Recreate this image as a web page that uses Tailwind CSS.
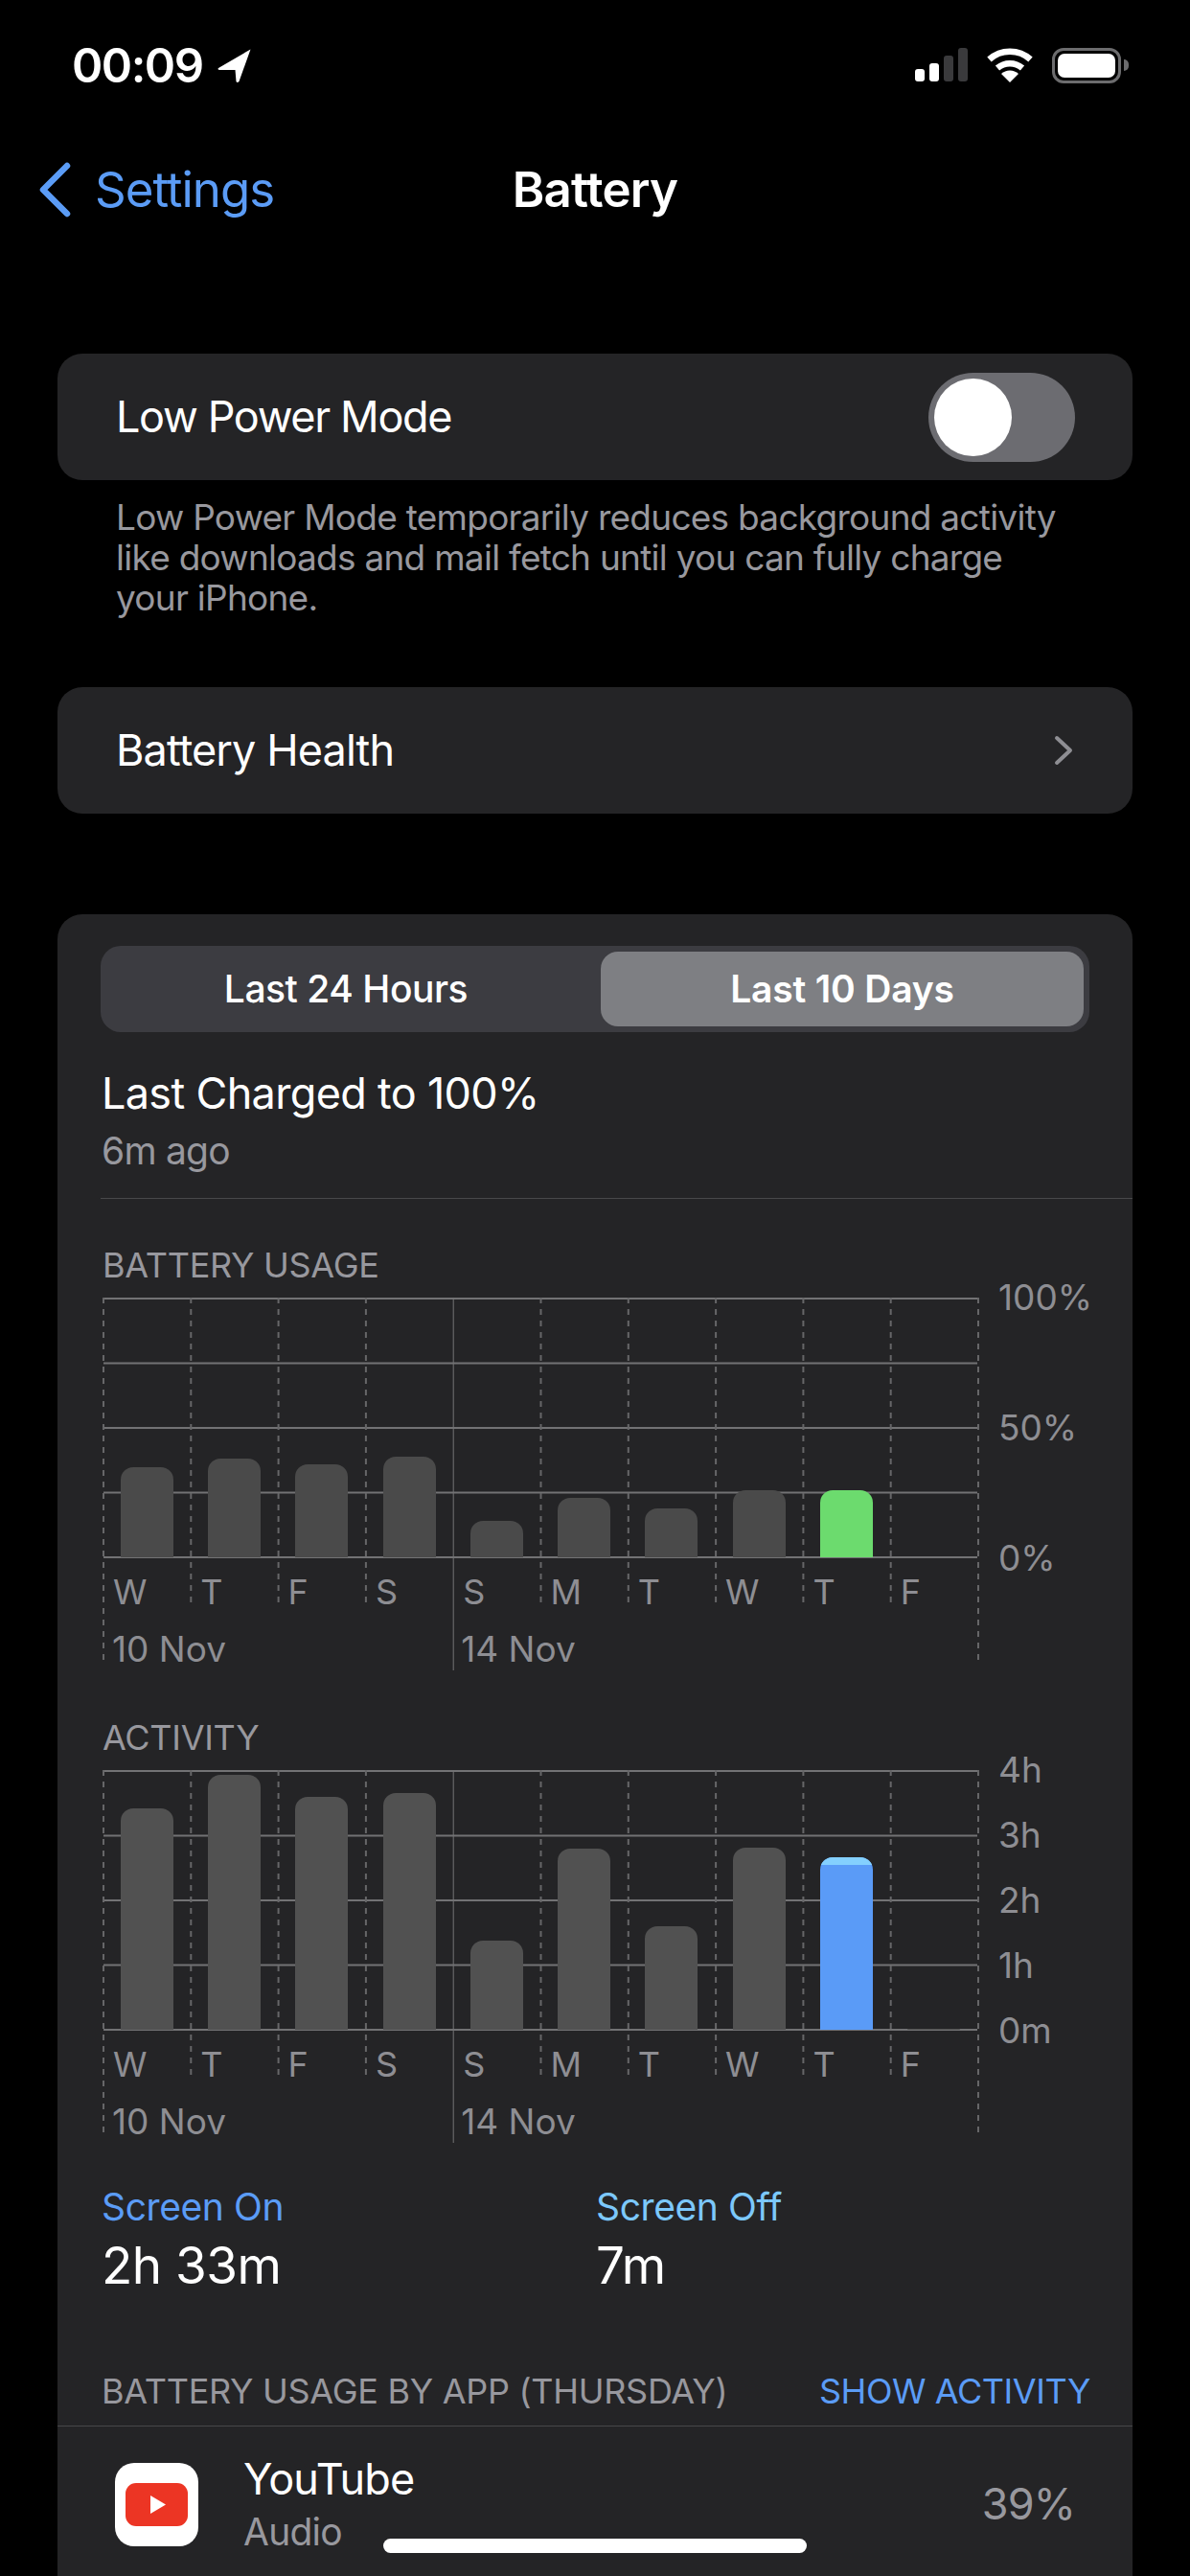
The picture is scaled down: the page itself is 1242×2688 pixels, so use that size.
<!DOCTYPE html>
<html lang="en">
<head>
    <meta charset="UTF-8">
    <meta name="viewport" content="width=device-width, initial-scale=1.0">
    <title>Battery</title>
    <script src="https://cdn.jsdelivr.net/npm/@tailwindcss/browser@4"></script>
</head>
<body class="bg-black text-white font-['Inter',sans-serif] overflow-hidden">
<div class="w-[1242px] h-[2688px] overflow-hidden flex flex-col">

    <!-- status bar -->
    <div class="h-[136px] shrink-0 flex items-center justify-between pl-[75px] pr-[64px]">
        <div class="flex items-center gap-[14px]">
            <span class="text-[49px] font-semibold tracking-[-0.03em] leading-none">00:09</span>
            <svg class="w-[38px] h-[37px]" viewBox="0 0 37 37"><path d="M35 1.5 L1.5 21 Q0 23 3 23 L19 23 L20 35 Q21 37 23 35 Z" fill="#fff"/></svg>
        </div>
        <div class="flex items-center gap-[20px]">
            <svg class="w-[55px] h-[36px]" viewBox="0 0 55 36">
                <rect x="0" y="22" width="10" height="13" rx="3" fill="#fff"/>
                <rect x="15" y="16" width="10" height="19" rx="3" fill="#fff"/>
                <rect x="30" y="8" width="10" height="27" rx="3" fill="#3a3a3c"/>
                <rect x="45" y="0" width="10" height="35" rx="3" fill="#3a3a3c"/>
            </svg>
            <svg class="w-[48px] h-[36px]" viewBox="0 0 48 36" fill="none" stroke="#fff">
                <path d="M2.5 12 A32 32 0 0 1 45.5 12" stroke-width="6.5"/>
                <path d="M11 21 A20 20 0 0 1 37 21" stroke-width="6.5"/>
                <path d="M24 36 L15 27 A13 13 0 0 1 33 27 Z" fill="#fff" stroke="none"/>
            </svg>
            <div class="flex items-center gap-[3px]">
                <div class="w-[72px] h-[37px] border-[3px] border-[#6c6c6e] rounded-[12px] p-[3px]">
                    <div class="w-full h-full bg-white rounded-[7px]"></div>
                </div>
                <div class="w-[5px] h-[12px] bg-[#6c6c6e] rounded-r-full"></div>
            </div>
        </div>
    </div>

    <!-- nav bar -->
    <div class="h-[124px] shrink-0 relative flex items-center pl-[40px]">
        <svg class="w-[34px] h-[58px]" viewBox="0 0 34 58" fill="none"><path d="M30 4 L5 29 L30 54" stroke="#5b9cf6" stroke-width="6.5" stroke-linecap="round" stroke-linejoin="round"/></svg>
        <span class="ml-[25px] text-[51px] text-[#5b9cf6] tracking-[-0.02em]">Settings</span>
        <span class="absolute left-0 right-0 text-center text-[51px] font-semibold tracking-[-0.015em]">Battery</span>
    </div>

    <!-- low power -->
    <div class="mt-[109px] mx-[60px] h-[132px] shrink-0 bg-[#242426] rounded-[26px] pl-[61px] pr-[60px] flex items-center justify-between">
        <span class="text-[45px] tracking-[-0.03em]">Low Power Mode</span>
        <div class="w-[153px] h-[93px] rounded-full bg-[#6c6c71] p-[6px]">
            <div class="w-[81px] h-[81px] rounded-full bg-white"></div>
        </div>
    </div>
    <p class="mt-[18px] mx-[121px] shrink-0 text-[37px] leading-[42px] text-[#98989e] tracking-[-0.02em] w-[1080px]">Low Power Mode temporarily reduces background activity<br>like downloads and mail fetch until you can fully charge<br>your iPhone.</p>

    <!-- battery health -->
    <div class="mt-[72px] mx-[60px] h-[132px] shrink-0 bg-[#242426] rounded-[26px] pl-[61px] pr-[62px] flex items-center justify-between">
        <span class="text-[45px] tracking-[-0.02em]">Battery Health</span>
        <svg class="w-[20px] h-[32px]" viewBox="0 0 20 32" fill="none"><path d="M3 3 L17 16 L3 29" stroke="#8e8e93" stroke-width="4" stroke-linecap="round" stroke-linejoin="round"/></svg>
    </div>

    <!-- usage card -->
    <div class="mt-[105px] mx-[60px] flex-1 bg-[#242426] rounded-t-[26px]">
        <div class="mt-[33px] ml-[45px] w-[1032px] h-[90px] bg-[#3c3c41] rounded-[21px] p-[6px] flex">
            <div class="w-[516px] flex items-center justify-center pr-[16px] text-[39px] font-medium tracking-[-0.012em]">Last 24 Hours</div>
            <div class="flex-1 flex items-center justify-center bg-[#7e7f83] rounded-[18px] text-[39px] font-semibold tracking-[-0.005em]">Last 10 Days</div>
        </div>
        <div class="mt-[38px] ml-[46px] text-[45px] leading-[52px] tracking-[-0.015em]">Last Charged to 100%</div>
        <div class="mt-[11px] ml-[46px] text-[39px] leading-[46px] text-[#98989e] tracking-[-0.02em]">6m ago</div>
        <div class="mt-[26px] ml-[45px] h-[1px] bg-[#48484a]"></div>

        <div id="charts"></div>

        <div class="mt-[44px] ml-[46px] flex">
            <div class="w-[516px]">
                <div class="text-[39px] leading-[46px] text-[#5b9cf6] tracking-[-0.01em]">Screen On</div>
                <div class="mt-[10px] text-[53px] leading-[56px] tracking-[-0.01em]">2h 33m</div>
            </div>
            <div>
                <div class="text-[39px] leading-[46px] text-[#7cc8fb] tracking-[-0.01em]">Screen Off</div>
                <div class="mt-[10px] text-[53px] leading-[56px] tracking-[-0.01em]">7m</div>
            </div>
        </div>

        <div class="mt-[83px] ml-[46px] mr-[44px] flex justify-between items-center h-[40px]">
            <span class="text-[36px] text-[#98989e] tracking-[-0.008em]">BATTERY USAGE BY APP (THURSDAY)</span>
            <span class="text-[36px] text-[#5b9cf6] tracking-[-0.012em]">SHOW ACTIVITY</span>
        </div>
        <div class="mt-[16px] h-[1px] bg-[#48484a]"></div>

        <div class="mt-[29px] ml-[60px] mr-[60px] flex items-center">
            <div class="w-[87px] h-[87px] bg-white rounded-[20px] flex items-center justify-center">
                <svg class="w-[65px] h-[45px]" viewBox="0 0 65 45"><rect width="65" height="45" rx="11" fill="#ec3524"/><path d="M26 13 L42 22.5 L26 32 Z" fill="#fff"/></svg>
            </div>
            <div class="ml-[47px] flex-1">
                <div class="text-[45px] leading-[52px] tracking-[-0.02em]">YouTube</div>
                <div class="mt-[6px] text-[39px] leading-[46px] text-[#98989e] tracking-[-0.02em]">Audio</div>
            </div>
            <span class="text-[45px] text-[#98989e] tracking-[-0.02em]">39%</span>
        </div>
    </div>
</div>

<!-- home indicator -->
<div class="fixed left-[400px] top-[2649px] w-[442px] h-[15px] bg-white rounded-full"></div>

<script>
    const days = ['W', 'T', 'F', 'S', 'S', 'M', 'T', 'W', 'T', 'F'];

    function gridSvg() {
        let lines = '';
        for (let i = 0; i <= 4; i++) {
            lines += `<line x1="1" x2="913" y1="${i * 67.5 + 1}" y2="${i * 67.5 + 1}" stroke="#727274" stroke-width="2"/>`;
        }
        for (let i = 0; i <= 10; i++) {
            const x = i * 91.3 + 1;
            if (i === 4) {
                lines += `<line x1="${x}" x2="${x}" y1="0" y2="389" stroke="#747476" stroke-width="1"/>`;
            } else {
                const end = (i === 0 || i === 10) ? 384 : 324;
                lines += `<line x1="${x}" x2="${x}" y1="0" y2="${end}" stroke="#666668" stroke-width="2" stroke-dasharray="6 6"/>`;
            }
        }
        return `<svg class="absolute left-0 top-0 w-[915px] h-[389px]" viewBox="0 0 915 389">${lines}</svg>`;
    }

    function chart(title, labels, bars, barClass, topMargin) {
        const cols = days.map((d, i) => {
            const h = bars[i];
            let bar = '';
            if (h > 0 && i === 8) {
                bar = barClass;
            } else if (h > 0) {
                bar = title === 'ACTIVITY' ? 'bg-[#515151]' : 'bg-[#4a4a4a]';
            }
            return `<div class="flex items-end justify-center pl-[1px]"><div class="w-[55px] rounded-t-[13px] overflow-hidden ${bar}" style="height:${h}px">${i === 8 && title === 'ACTIVITY' ? '<div class="h-[8px] bg-[#84d0fe]"></div>' : ''}</div></div>`;
        }).join('');
        const dayLabels = days.map(d => `<div class="pl-[11px] text-[36px] leading-[40px] text-[#8e8e93]">${d}</div>`).join('');
        const axis = labels.map(l => `<div class="h-0 flex items-center text-[37px] text-[#8e8e93]">${l}</div>`).join('');
        return `
        <div class="${topMargin} ml-[47px] text-[36px] leading-[40px] text-[#98989e] tracking-[-0.008em]">${title}</div>
        <div class="mt-[14px] ml-[47px] flex">
            <div class="relative w-[913px] h-[389px] shrink-0">
                ${gridSvg()}
                <div class="relative grid grid-cols-10 h-[271px]">${cols}</div>
                <div class="relative grid grid-cols-10 mt-[16px]">${dayLabels}</div>
                <div class="relative grid grid-cols-10 mt-[20px] text-[37px] leading-[40px] text-[#8e8e93]">
                    <div class="col-span-4 pl-[10px]">10 Nov</div>
                    <div class="col-span-6 pl-[9px]">14 Nov</div>
                </div>
            </div>
            <div class="ml-[22px] h-[272px] flex flex-col justify-between">${axis}</div>
        </div>`;
    }

    document.getElementById('charts').innerHTML =
        chart('BATTERY USAGE', ['100%', '50%', '0%'], [94, 103, 97, 105, 38, 62, 51, 70, 70, 0], 'bg-[#6cdb6e]', 'mt-[49px]') +
        chart('ACTIVITY', ['4h', '3h', '2h', '1h', '0m'], [231, 266, 243, 247, 93, 189, 108, 190, 180, 1], 'bg-[#5a9bf7]', 'mt-[50px]');
</script>
</body>
</html>
